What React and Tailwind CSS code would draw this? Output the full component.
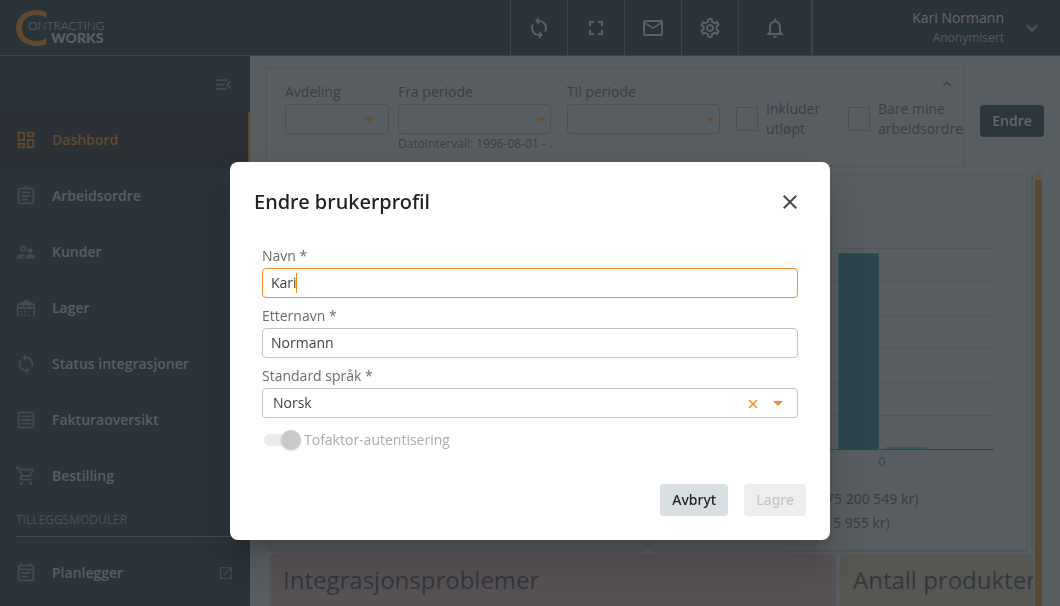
import {
  MdClose,
  MdExpandLess,
  MdFullscreen,
  MdMailOutline,
  MdMenuOpen,
  MdNotificationsNone,
  MdOpenInNew,
  MdOutlineAssignment,
  MdOutlineDashboard,
  MdOutlineEventNote,
  MdOutlineReceipt,
  MdOutlineSettings,
  MdOutlineShoppingCart,
  MdOutlineSupervisorAccount,
  MdSync,
} from "react-icons/md";

function WarehouseIcon({ size }) {
  return (
    <svg width={size} height={size} viewBox="0 0 24 24" fill="currentColor" aria-hidden="true">
      <path d="M6 19H8V21H6V19M12 3L2 8V21H4V13H20V21H22V8L12 3M8 11H4V9H8V11M14 11H10V9H14V11M20 11H16V9H20V11M6 15H8V17H6V15M10 15H12V17H10V15M10 19H12V21H10V19M14 19H16V21H14V19Z" />
    </svg>
  );
}

function Triangle({ className }) {
  return (
    <svg className={className} viewBox="0 0 10 5" fill="currentColor" aria-hidden="true">
      <path d="M0 0H10L5 5Z" />
    </svg>
  );
}

function Logo() {
  return (
    <svg width="100" height="40" viewBox="0 0 100 40" role="img" aria-label="Contracting Works">
      <path
        d="M30.500 4.200C27.500 2.700 24 2 20.500 2C8.500 2 0 9.500 0 20C0 30.500 8.500 38 20.500 38C24 38 27.500 37.400 30.500 36V30C27.500 32 24.500 33 21 33C12 33 6 28 6 20C6 12 12 7 21 7C24.500 7 27.500 8 30.500 10.200Z"
        fill="#63492f"
      />
      <text x="12" y="22" fontSize="12" fontWeight="300" fill="#676c70" fontFamily="Lato, sans-serif">
        ONTRACTING
      </text>
      <text x="35" y="35" fontSize="14" fontWeight="900" fill="#5c6165" fontFamily="Lato, sans-serif">
        WORKS
      </text>
    </svg>
  );
}

const tools = [
  { label: "Synkroniser", Icon: MdSync },
  { label: "Fullskjerm", Icon: MdFullscreen },
  { label: "Meldinger", Icon: MdMailOutline },
  { label: "Innstillinger", Icon: MdOutlineSettings },
];

function Header() {
  return (
    <header className="flex h-14 shrink-0 items-stretch border-b border-[#3d454c] bg-[#2b333a] text-[#5b6064]">
      <a href="#hjem" className="flex items-center pl-4">
        <Logo />
      </a>
      <div className="ml-auto flex">
        {tools.map(({ label, Icon }) => (
          <button
            key={label}
            aria-label={label}
            className="flex w-[57px] items-center justify-center border-l border-[#3d454c]"
          >
            <Icon size={24} />
          </button>
        ))}
        <button
          aria-label="Varsler"
          className="flex w-[75px] items-center justify-center border-l border-r-2 border-[#3d454c]"
        >
          <MdNotificationsNone size={24} />
        </button>
      </div>
      <button className="flex w-[247px] items-center justify-end gap-5 pr-5" aria-label="Brukermeny">
        <span className="flex flex-col text-right">
          <span className="text-sm leading-5 text-[#65696c]">Kari Normann</span>
          <span className="text-xs leading-5 text-[#565b5f]">Anonymisert</span>
        </span>
        <svg width="16" height="16" viewBox="0 0 16 16" fill="none" stroke="#484f55" strokeWidth="2.500" aria-hidden="true">
          <path d="M3 5.500L8 10.500L13 5.500" />
        </svg>
      </button>
    </header>
  );
}

const links = [
  { label: "Dashbord", Icon: MdOutlineDashboard, active: true },
  { label: "Arbeidsordre", Icon: MdOutlineAssignment },
  { label: "Kunder", Icon: MdOutlineSupervisorAccount },
  { label: "Lager", Icon: WarehouseIcon },
  { label: "Status integrasjoner", Icon: MdSync },
  { label: "Fakturaoversikt", Icon: MdOutlineReceipt },
  { label: "Bestilling", Icon: MdOutlineShoppingCart },
];

function SideLink({ label, Icon, active, external }) {
  return (
    <a
      href="#side"
      className={
        active
          ? "flex h-14 items-center border-r-2 border-[#5f472c] bg-[#2a3036] pl-[15px] text-[#644931]"
          : "flex h-14 items-center pl-[15px] pr-4 text-[#596064]"
      }
    >
      <span className={active ? "w-[37px]" : "w-[37px] text-[#434b51]"}>
        <Icon size={22} />
      </span>
      <span className="text-sm font-semibold">{label}</span>
      {external && <MdOpenInNew size={16} className="ml-auto text-[#434b51]" />}
    </a>
  );
}

function Sidebar() {
  return (
    <aside className="flex w-[250px] shrink-0 flex-col bg-[#2b343b]">
      <div className="flex h-14 shrink-0 items-center justify-end pr-4">
        <button aria-label="Skjul meny" className="text-[#434b51]">
          <MdMenuOpen size={21} />
        </button>
      </div>
      <nav>
        {links.map((link) => (
          <SideLink key={link.label} {...link} />
        ))}
        <h2 className="mb-2 ml-4 h-[33px] border-b border-[#434b51] text-xs leading-8 text-[#4a5257]">
          TILLEGGSMODULER
        </h2>
        <SideLink label="Planlegger" Icon={MdOutlineEventNote} external />
      </nav>
    </aside>
  );
}

function FilterField({ id, label, hint, className }) {
  return (
    <div className={className}>
      <label htmlFor={id} className="block h-6 text-sm leading-6">
        {label}
      </label>
      <div className="relative">
        <select
          id={id}
          className="block h-[30px] w-full appearance-none rounded border border-[#4b5054] bg-transparent"
        />
        <Triangle
          className={
            hint === undefined
              ? "pointer-events-none absolute right-[15px] top-[13px] h-[5px] w-[10px] text-[#654d31]"
              : "pointer-events-none absolute right-1.5 top-[14px] h-1 w-2 text-[#654d31]"
          }
        />
      </div>
      {hint && <p className="overflow-hidden whitespace-nowrap text-xs leading-5">{hint}</p>}
    </div>
  );
}

function CheckField({ id, label, className }) {
  return (
    <div className={className}>
      <input
        id={id}
        type="checkbox"
        className="h-6 w-[22px] shrink-0 appearance-none rounded-[1px] border border-[#4b5054]"
      />
      <label htmlFor={id} className="text-sm leading-5">
        {label}
      </label>
    </div>
  );
}

function Filters() {
  return (
    <form className="flex items-center gap-4 pl-4 pr-4 pt-[11px]">
      <div className="relative flex h-[100px] min-w-0 flex-1 items-start overflow-hidden border border-[#4f5458] pl-[18px] pt-3 text-[#383d42]">
        <FilterField id="avdeling" label="Avdeling" className="w-[104px] shrink-0" />
        <FilterField
          id="fra"
          label="Fra periode"
          hint="Datointervall: 1996-08-01 - 2"
          className="ml-[9px] w-[153px] shrink-0"
        />
        <FilterField id="til" label="Til periode" hint="" className="ml-4 w-[153px] shrink-0" />
        <CheckField
          id="utlopt"
          label="Inkluder utløpt"
          className="ml-4 flex w-[112px] shrink-0 items-center gap-2 pr-4 pt-[19px]"
        />
        <CheckField
          id="mine"
          label="Bare mine arbeidsordre"
          className="flex min-w-0 flex-1 items-center gap-2 pt-[19px]"
        />
        <button type="button" aria-label="Skjul filter" className="absolute right-2 top-2">
          <MdExpandLess size={16} />
        </button>
      </div>
      <button
        type="button"
        className="mt-2 h-8 w-16 rounded bg-[#2c373d] text-sm font-semibold text-[#64696d]"
      >
        Endre
      </button>
    </form>
  );
}

function Chart() {
  return (
    <svg className="mt-[69px] block h-[232px] w-[345px]" viewBox="0 0 345 232" role="img" aria-label="Søylediagram">
      <g stroke="#505558" strokeWidth="1">
        <path d="M0 4.500H343M0 37.500H343M0 71.500H343M0 104.500H343M0 138.500H343M0 171.500H343" />
      </g>
      <rect x="187.500" y="9.500" width="40" height="196" fill="#2a464c" stroke="#2f5257" />
      <rect x="235" y="203" width="41" height="2" fill="#35555a" />
      <path d="M0 205.500H343" stroke="#3b4045" strokeWidth="1" />
      <text x="231" y="222" textAnchor="middle" fontSize="12" fill="#3f4448">
        0
      </text>
    </svg>
  );
}

function Dashboard() {
  return (
    <div className="mr-[17px] mt-[2px] flex min-h-0 flex-1">
      <div className="flex min-w-0 flex-1 flex-col gap-1 overflow-hidden pl-5 pt-[5px]">
        <div className="flex h-[376px] shrink-0 gap-1">
          <section className="w-[376px] shrink-0 rounded border border-[#54595d] shadow-sm" />
          <section className="w-[377px] shrink-0 rounded border border-[#54595d] font-['Noto_Sans',sans-serif] text-sm leading-6 text-[#383d42] shadow-sm">
            <Chart />
            <ul className="mt-[11px]">
              <li className="pl-[175px]">75 200 549 kr)</li>
              <li className="pl-[182px]">5 955 kr)</li>
            </ul>
          </section>
          <section className="w-[376px] shrink-0 rounded border-l-2 border-[#54554f]" />
        </div>
        <div className="flex h-16 shrink-0 gap-1 text-2xl text-[#33383d]">
          <h2 className="w-[566px] shrink-0 rounded-t bg-[#585255] pl-[13px] pt-2.5">
            Integrasjonsproblemer
          </h2>
          <h2 className="w-[376px] shrink-0 rounded-t bg-[#565652] pl-[13px] pt-2.5">
            Antall produkter
          </h2>
        </div>
      </div>
      <div className="flex w-2.5 shrink-0 flex-col items-center bg-[#585d61]">
        <div className="flex h-[11px] w-full items-center justify-center bg-[#5b5a58]">
          <Triangle className="h-1 w-1.5 rotate-180 text-[#6b4c2d]" />
        </div>
        <div className="w-[7px] flex-1 bg-[#574733]" />
      </div>
    </div>
  );
}

function TextField({ id, label, value, focused }) {
  return (
    <div>
      <label htmlFor={id} className="block h-6 text-sm leading-6 text-[#6b6b6b]">
        {label}
      </label>
      <div className="relative mb-1.5">
        <input
          id={id}
          defaultValue={value}
          className={
            focused
              ? "block h-[30px] w-full rounded border border-[#f7902a] px-2 pb-0.5 text-sm text-[#424242] outline-none"
              : "block h-[30px] w-full rounded border border-[#c4c4c4] px-2 pb-0.5 text-sm text-[#424242] outline-none"
          }
        />
        {focused && <span className="absolute left-[34px] top-[5px] h-5 w-px bg-[#f78500]" />}
      </div>
    </div>
  );
}

function ProfileDialog() {
  return (
    <div className="fixed inset-0 flex items-start justify-center pt-[162px]">
      <div
        role="dialog"
        aria-labelledby="tittel"
        className="w-[600px] max-w-full rounded-lg bg-white px-6 pb-6 pt-6 shadow-[0_11px_15px_-7px_rgba(0,0,0,0.2),0_24px_38px_3px_rgba(0,0,0,0.14)]"
      >
        <div className="flex h-8 items-center justify-between">
          <h1 id="tittel" className="font-['Noto_Sans',sans-serif] text-xl font-medium text-[#212121]">
            Endre brukerprofil
          </h1>
          <button aria-label="Lukk" className="mr-1 text-[#4a4a4a]">
            <MdClose size={24} />
          </button>
        </div>
        <form className="mt-[26px] px-2">
          <TextField id="navn" label="Navn *" value="Kari" focused />
          <TextField id="etternavn" label="Etternavn *" value="Normann" />
          <label htmlFor="sprak" className="block h-6 text-sm leading-6 text-[#6b6b6b]">
            Standard språk *
          </label>
          <div className="relative">
            <select
              id="sprak"
              className="block h-[30px] w-full appearance-none rounded border border-[#c4c4c4] bg-white pl-2.5 text-sm text-[#424242]"
            >
              <option>Norsk</option>
            </select>
            <button type="button" aria-label="Tøm" className="absolute right-10 top-[11px] text-[#f98c23]">
              <svg width="10" height="10" viewBox="0 0 10 10" fill="none" stroke="currentColor" strokeWidth="1.600">
                <path d="M1 1L9 9M9 1L1 9" />
              </svg>
            </button>
            <Triangle className="pointer-events-none absolute right-[15px] top-[13px] h-[5px] w-[10px] text-[#f98c23]" />
          </div>
          <div className="mt-3 flex h-5 items-center gap-1 pl-0.5">
            <input
              id="tofaktor"
              type="checkbox"
              role="switch"
              disabled
              className="h-3 w-9 appearance-none rounded-full bg-linear-to-r from-[#ececec] from-90% to-white to-90% before:relative before:-top-1 before:left-[17px] before:block before:size-5 before:rounded-full before:bg-[#cacaca] before:shadow before:content-['']"
            />
            <label htmlFor="tofaktor" className="text-sm leading-5 text-[#acacac]">
              Tofaktor-autentisering
            </label>
          </div>
        </form>
        <div className="mt-[34px] flex justify-end gap-4 font-['Noto_Sans',sans-serif] text-sm font-medium">
          <button className="h-8 rounded bg-[#d7dfe3] px-3 text-[#212121]">Avbryt</button>
          <button disabled className="h-8 rounded bg-[#eeeeee] px-3 text-[#c4c4c4]">
            Lagre
          </button>
        </div>
      </div>
    </div>
  );
}

export default function App() {
  return (
    <div className="flex h-screen flex-col overflow-hidden bg-[#585d61] font-['Open_Sans','Noto_Sans',sans-serif]">
      <Header />
      <div className="flex min-h-0 flex-1">
        <Sidebar />
        <main className="flex min-w-0 flex-1 flex-col">
          <Filters />
          <Dashboard />
        </main>
      </div>
      <ProfileDialog />
    </div>
  );
}
